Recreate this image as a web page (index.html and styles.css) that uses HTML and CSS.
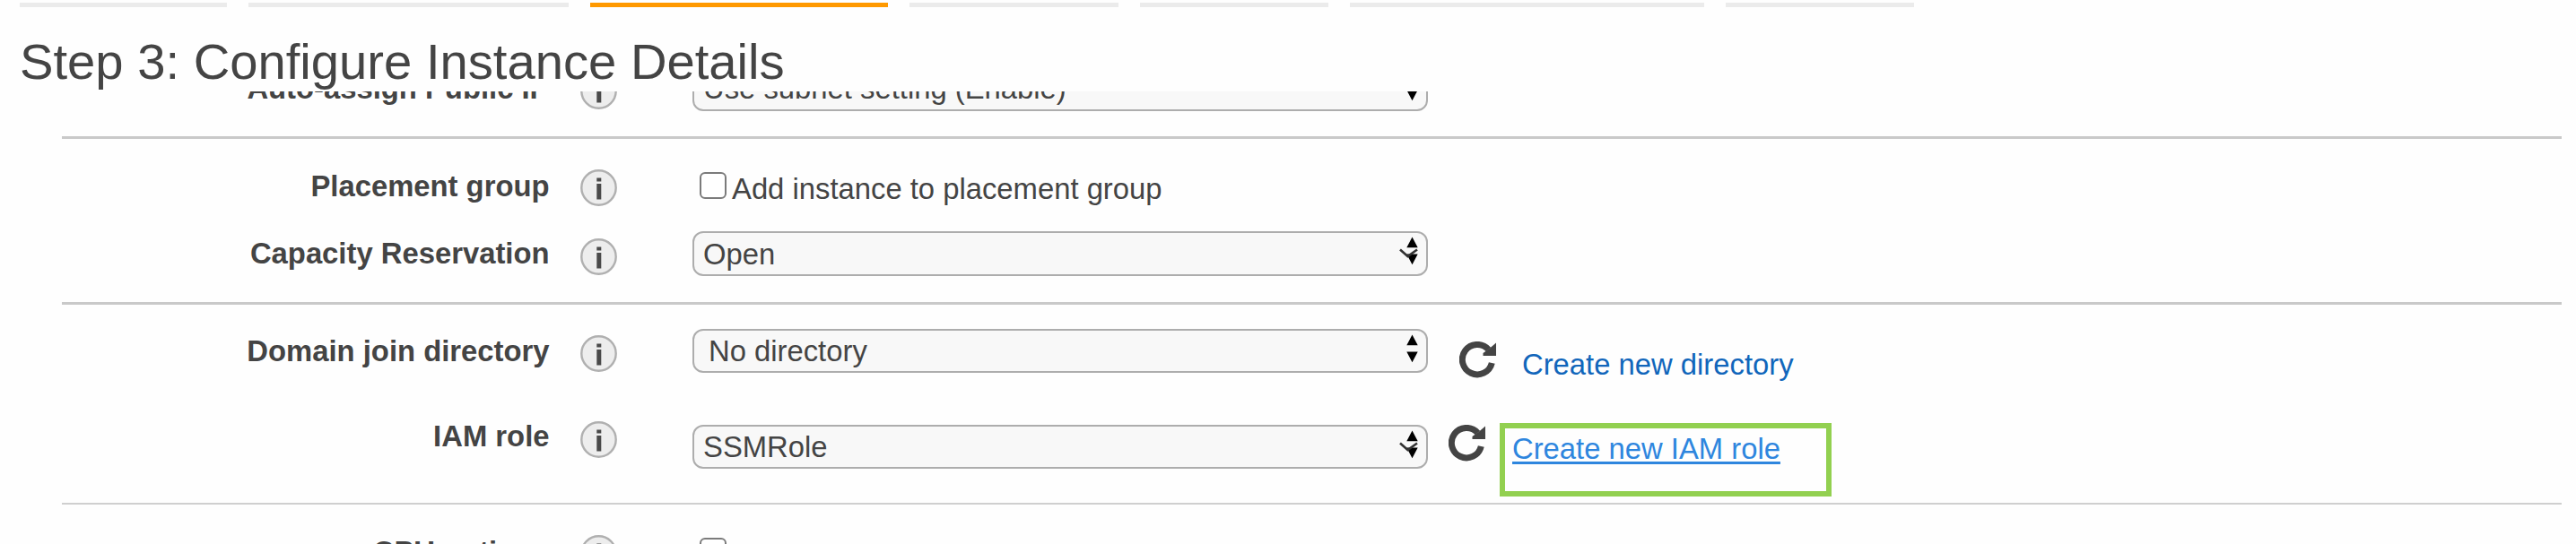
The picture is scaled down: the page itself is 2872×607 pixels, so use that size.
FILE: index.html
```
<!DOCTYPE html>
<html lang="en">
<head>
<meta charset="utf-8">
<title>Configure Instance Details</title>
<link rel="stylesheet" href="styles.css">
</head>
<body>
<svg width="0" height="0" class="defs" aria-hidden="true">
  <symbol id="info" viewBox="0 0 41 41">
    <circle cx="20.5" cy="20.5" r="19.2" fill="#ededed" stroke="#b0b0b0" stroke-width="2.4"/>
    <path d="M18.300 9.500h5v4h-5zM18.300 16h5v17.500h-5z" fill="#4a4a4a"/>
  </symbol>
  <symbol id="arrows" viewBox="0 0 22 32">
    <path d="M9.300 12.300L15.500.5l6.200 11.800zM9.300 19.500h12.400l-6.200 11.800z" fill="#000"/>
  </symbol>
  <symbol id="chevron" viewBox="0 0 22 32">
    <path d="M2 14.500l8.500 7.500L21 14.500" fill="none" stroke="#333" stroke-width="2.600"/>
  </symbol>
  <symbol id="refresh" viewBox="0 0 42 41">
    <path d="M36.300 24A16.700 16.700 0 1 1 32.500 9" fill="none" stroke="#444" stroke-width="7"/>
    <path d="M41 1.500V16H26.500v-3l7-5z" fill="#444"/>
  </symbol>
</svg>
<nav class="steps">
  <span class="step s1"></span><span class="step s2"></span><span class="step s3 active"></span><span class="step s4"></span><span class="step s5"></span><span class="step s6"></span><span class="step s7"></span>
</nav>
<h1 class="title">Step 3: Configure Instance Details</h1>
<main class="form">
  <section class="group g1">
    <div class="row r-ip">
      <span class="label">Auto-assign Public IP</span>
      <svg class="info"><use href="#info"/></svg>
      <div class="select"><span>Use subnet setting (Enable)</span><svg class="arrows"><use href="#arrows"/></svg></div>
    </div>
  </section>
  <section class="group g2">
    <div class="row r-place">
      <span class="label">Placement group</span>
      <svg class="info"><use href="#info"/></svg>
      <label class="check"><i class="box"></i><span>Add instance to placement group</span></label>
    </div>
    <div class="row r-cap">
      <span class="label">Capacity Reservation</span>
      <svg class="info"><use href="#info"/></svg>
      <div class="select"><span>Open</span><svg class="arrows"><use href="#arrows"/><use href="#chevron"/></svg></div>
    </div>
  </section>
  <section class="group g3">
    <div class="row r-dir">
      <span class="label">Domain join directory</span>
      <svg class="info"><use href="#info"/></svg>
      <div class="select"><span>No directory</span><svg class="arrows"><use href="#arrows"/></svg></div>
      <svg class="refresh"><use href="#refresh"/></svg>
      <a class="link">Create new directory</a>
    </div>
    <div class="row r-iam">
      <span class="label">IAM role</span>
      <svg class="info"><use href="#info"/></svg>
      <div class="select"><span>SSMRole</span><svg class="arrows"><use href="#arrows"/><use href="#chevron"/></svg></div>
      <svg class="refresh"><use href="#refresh"/></svg>
      <div class="highlight"><a class="link">Create new IAM role</a></div>
    </div>
  </section>
  <section class="group g4">
    <div class="row r-cpu">
      <span class="label">CPU options</span>
      <svg class="info"><use href="#info"/></svg>
      <label class="check"><i class="box"></i></label>
    </div>
  </section>
</main>
</body>
</html>
```
FILE: styles.css
```
* { box-sizing: border-box; }
body {
  margin: 0;
  height: 607px;
  overflow: hidden;
  display: flex;
  flex-direction: column;
  background: #fefefe;
  color: #444;
  font: 32.8px/38px "Liberation Sans", Arial, sans-serif;
  white-space: nowrap;
}
.defs { display: none; }
svg { display: block; flex: none; }

.steps { display: flex; gap: 24px; padding: 3px 0 0 22px; height: 8px; flex: none; }
.step { height: 5px; background: #ebebeb; }
.step.active { background: #ff9900; }
.s1 { width: 231px; }
.s2 { width: 357px; }
.s3 { width: 332px; }
.s4 { width: 233px; }
.s5 { width: 210px; }
.s6 { width: 395px; }
.s7 { width: 210px; }

.title {
  margin: 0;
  height: 94px;
  flex: none;
  padding: 29px 0 0 22px;
  font-size: 56.2px;
  line-height: 64px;
  font-weight: 400;
}

.form { height: 505px; overflow: hidden; padding: 0 16px 0 69px; flex: none; }
.group { display: flow-root; border-bottom: 3px solid #c9c9c9; }
.g1 { height: 53px; }
.g2 { height: 185px; padding-top: 34px; }
.g3 { height: 223px; padding-top: 27px; border-bottom: 2px solid #cfcfcf; }
.g4 { height: 80px; padding-top: 34px; border: 0; }

.row { display: flex; align-items: flex-start; }
.r-ip { margin-top: -28px; height: 60px; }
.r-place { height: 69px; }
.r-cap { height: 60px; }
.r-dir { height: 105px; }
.r-iam { height: 88px; }

.label { width: 543.5px; text-align: right; font-weight: 700; flex: none; }
.info { width: 41px; height: 41px; margin-left: 34.5px; }
.select {
  width: 820px;
  height: 49px;
  margin-left: 84px;
  padding: 0 9px 0 10px;
  display: flex;
  justify-content: space-between;
  align-items: flex-start;
  flex: none;
  border: 2px solid #adadad;
  border-radius: 12px;
  background: #f8f8f8;
}
.arrows { width: 22px; height: 32px; margin-top: 4px; }
.check { display: flex; margin-left: 92px; }
.box {
  width: 30px;
  height: 30px;
  border: 2px solid #7b7b7b;
  border-radius: 6px;
  background: #fff;
}
.check span { margin-left: 6px; }
.refresh { width: 42px; height: 41px; }
.link { color: #1166bb; }

.r-ip .label { margin-top: 6px; }
.r-ip .info { margin-top: 7px; }
.r-ip .select { margin-top: 1px; }
.r-ip .select span { margin-top: 3px; }

.r-place .box { margin-top: 3px; }
.r-place .check span { margin-top: 3px; }

.r-cap .label { margin-top: 6px; }
.r-cap .info { margin-top: 8px; }
.r-cap .select { height: 50px; }
.r-cap .select span { margin-top: 5px; }

.r-dir .label { margin-top: 6px; }
.r-dir .info { margin-top: 7px; }
.r-dir .select span { margin: 4px 0 0 6px; }
.r-dir .refresh { margin: 14px 0 0 35px; }
.r-dir .link { margin: 21px 0 0 28px; }

.r-iam .label { margin-top: -4px; }
.r-iam .info { margin-top: -2.5px; }
.r-iam .select { margin-top: 2px; }
.r-iam .select span { margin-top: 4px; }
.r-iam .refresh { margin: 2px 0 0 23px; }
.highlight {
  width: 370px;
  height: 82px;
  margin: 0 0 0 15px;
  padding: 4px 0 0 8px;
  border: 6px solid #92d050;
}
.highlight .link {
  color: #2e86de;
  text-decoration: underline;
  text-decoration-thickness: 3px;
  text-underline-offset: 3px;
}

.r-cpu .box { margin-top: 3px; }
```
